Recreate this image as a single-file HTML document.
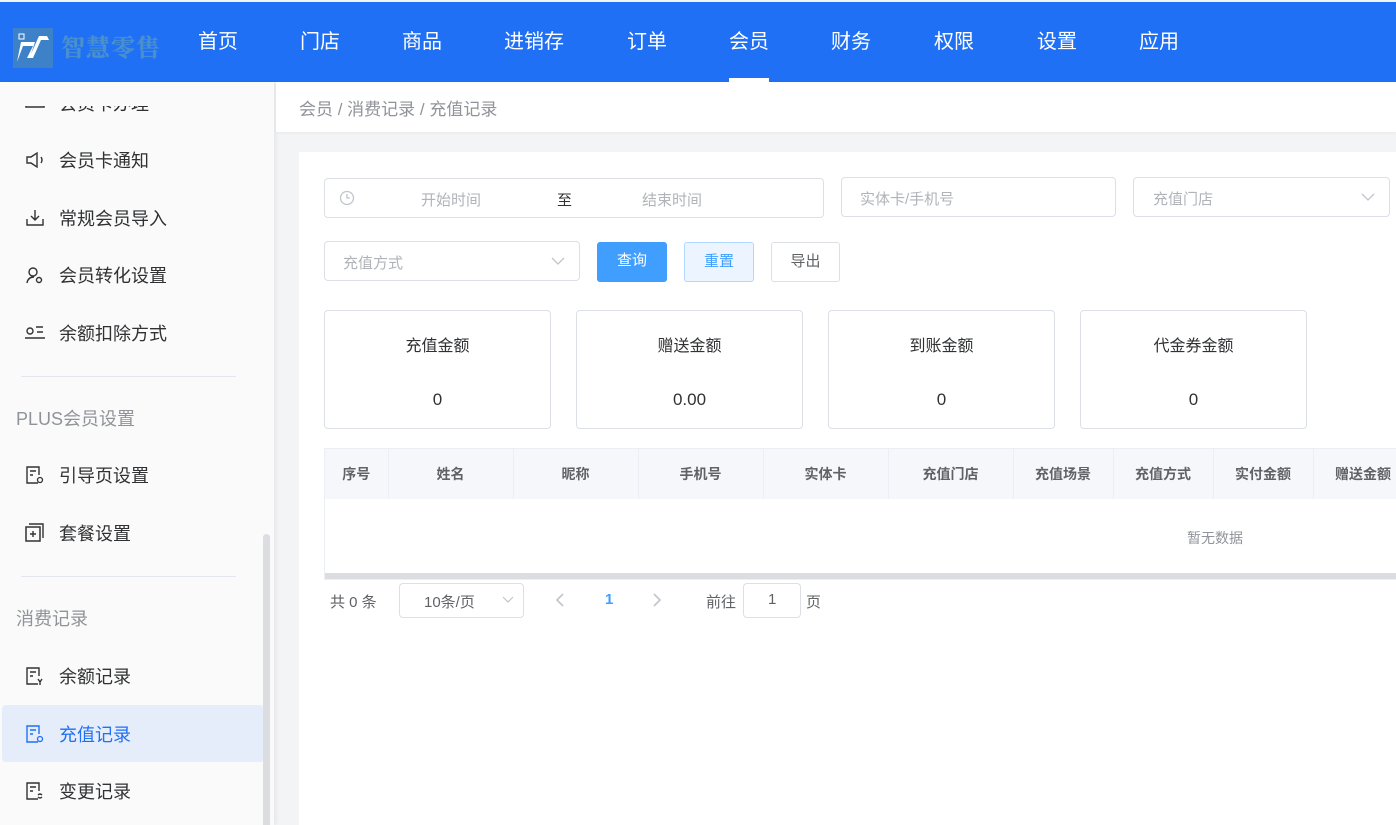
<!DOCTYPE html>
<html><head><meta charset="utf-8"><style>
*{box-sizing:border-box;margin:0;padding:0}
body{width:1396px;height:825px;overflow:hidden;background:#f3f4f6;font-family:"Liberation Sans","Noto Sans CJK SC",sans-serif;position:relative;color:#303133}
.top{position:absolute;left:0;top:2px;width:1396px;height:80px;background:#1f70f5}
.nav{position:absolute;top:0;height:80px;line-height:80px;color:#fff;font-size:20px;transform:translateX(-50%)}
.nav.act:after{content:"";position:absolute;left:0;right:0;bottom:0;height:4px;background:#fff}
.side{position:absolute;left:0;top:82px;width:274px;height:743px;background:#fafafa;box-shadow:2px 0 4px rgba(0,0,0,.06);overflow:hidden}
.it{position:absolute;left:24px;font-size:18px;color:#303133;display:flex;align-items:center}
.it svg{margin-right:13px}
.grp{position:absolute;left:16px;font-size:18px;color:#909399}
.hr{position:absolute;left:21px;width:215px;height:1px;background:#e4e7ed}
.abs{position:absolute}
.inp{position:absolute;border:1px solid #dcdfe6;border-radius:4px;background:#fff;font-size:15px;color:#b0b3b8}
.btn{position:absolute;border-radius:3px;font-size:15px;text-align:center;line-height:38px;height:40px}
.stat{position:absolute;top:310px;width:227px;height:119px;border:1px solid #dcdfe6;border-radius:4px;background:#fff;text-align:center}
.stat .a{margin-top:21px;font-size:16px;color:#303133}
.stat .b{margin-top:34px;font-size:17px}
table{table-layout:fixed}
th{font-size:14px;color:#606266;font-weight:bold;border-right:1px solid #ebeef5;height:50px;white-space:nowrap;overflow:hidden}
</style></head><body>
<div class="top">
<svg class="abs" style="left:13px;top:26px" width="40" height="40" viewBox="0 0 40 40"><rect width="40" height="40" fill="#3d82c9"/><path d="M4 34 L10 18 L20 18 L14 30 L20 30 L28 12 L36 12 L34 8 L26 8 L18 26 L22 14 L8 14 Z" fill="#fff"/><rect x="6" y="6" width="5" height="5" fill="none" stroke="#fff"/></svg>
<div class="abs" style="left:61px;top:26px;font-size:24px;font-weight:bold;color:#4a90cf;letter-spacing:1px;font-family:'Noto Serif CJK SC',serif;text-shadow:0 0 1px #4a90cf">智慧零售</div>
<div class="nav" style="left:218px">首页</div><div class="nav" style="left:320px">门店</div><div class="nav" style="left:422px">商品</div><div class="nav" style="left:534px">进销存</div><div class="nav" style="left:647px">订单</div><div class="nav act" style="left:749px">会员</div><div class="nav" style="left:851px">财务</div><div class="nav" style="left:954px">权限</div><div class="nav" style="left:1057px">设置</div><div class="nav" style="left:1159px">应用</div>
</div>
<div class="side">
<div class="it" style="top:8px"><svg width="22" height="20"><path d="M2 4v10h18V4" fill="none" stroke="#333" stroke-width="1.5"/></svg>会员卡办理</div>
<div class="abs" style="left:0;top:0;width:274px;height:24px;background:#fafafa"></div>
<div class="it" style="top:65px"><svg width="22" height="20"><path d="M3 7h4l6-4v14l-6-4H3z M17 7q2 3 0 6" fill="none" stroke="#333" stroke-width="1.4"/></svg>会员卡通知</div>
<div class="it" style="top:123px"><svg width="22" height="20"><path d="M11 2v10M7 8l4 4 4-4M3 11v6h16v-6" fill="none" stroke="#333" stroke-width="1.4"/></svg>常规会员导入</div>
<div class="it" style="top:180px"><svg width="22" height="20"><circle cx="9" cy="7" r="4" fill="none" stroke="#333" stroke-width="1.4"/><path d="M3 18q1-6 7-6" fill="none" stroke="#333" stroke-width="1.4"/><circle cx="15" cy="15" r="2.5" fill="none" stroke="#333" stroke-width="1.4"/></svg>会员转化设置</div>
<div class="it" style="top:238px"><svg width="22" height="20"><circle cx="6" cy="8" r="3" fill="none" stroke="#333" stroke-width="1.4"/><path d="M12 4h7M13 9h6M1 15h20" stroke="#333" stroke-width="1.4"/></svg>余额扣除方式</div>
<div class="hr" style="top:294px"></div>
<div class="grp" style="top:323px">PLUS会员设置</div>
<div class="it" style="top:380px"><svg width="22" height="20"><path d="M14 18H3V2h12v8M6 6h6M6 10h3" fill="none" stroke="#333" stroke-width="1.4"/><circle cx="16" cy="15" r="2.5" fill="none" stroke="#333" stroke-width="1.3"/></svg>引导页设置</div>
<div class="it" style="top:438px"><svg width="22" height="20"><rect x="2" y="4" width="14" height="14" fill="none" stroke="#333" stroke-width="1.5"/><path d="M5 1h14v14M9 8v6M6 11h6" fill="none" stroke="#333" stroke-width="1.4"/></svg>套餐设置</div>
<div class="hr" style="top:494px"></div>
<div class="grp" style="top:523px">消费记录</div>
<div class="it" style="top:581px"><svg width="22" height="20"><path d="M14 18H3V2h12v8M6 6h6M6 10h3M14 13l2 3 2-3M16 16v3" fill="none" stroke="#333" stroke-width="1.4"/></svg>余额记录</div>
<div class="abs" style="left:2px;top:623px;width:262px;height:57px;background:#e5edfb;border-radius:4px"></div>
<div class="it" style="top:639px;color:#1f70f5"><svg width="22" height="20"><path d="M14 18H3V2h12v8M6 6h6M6 10h3" fill="none" stroke="#1f70f5" stroke-width="1.4"/><circle cx="16" cy="15" r="2.5" fill="none" stroke="#1f70f5" stroke-width="1.3"/></svg>充值记录</div>
<div class="it" style="top:696px"><svg width="22" height="20"><path d="M14 18H3V2h12v8M6 6h6M6 10h3M14 14q2-2 4 0M18 16q-2 2-4 0" fill="none" stroke="#333" stroke-width="1.4"/></svg>变更记录</div>
<div class="abs" style="left:263px;top:452px;width:7px;height:300px;background:#dcdde0;border-radius:4px"></div>
</div>
<div class="abs" style="left:276px;top:82px;width:1120px;height:50px;background:#fff;box-shadow:0 1px 3px rgba(0,0,0,.05)"></div>
<div class="abs" style="left:299px;top:95px;font-size:17px;color:#909399">会员 / 消费记录 / 充值记录</div>
<div class="abs" style="left:299px;top:152px;width:1097px;height:673px;background:#fff"></div>
<div class="inp" style="left:324px;top:178px;width:500px;height:40px">
<svg class="abs" style="left:14px;top:11px" width="16" height="16"><circle cx="8" cy="8" r="6.5" fill="none" stroke="#c0c4cc" stroke-width="1.3"/><path d="M8 4v4h3" fill="none" stroke="#c0c4cc" stroke-width="1.3"/></svg>
<span class="abs" style="left:96px;top:10px">开始时间</span><span class="abs" style="left:232px;top:10px;color:#303133">至</span><span class="abs" style="left:317px;top:10px">结束时间</span></div>
<div class="inp" style="left:841px;top:177px;width:275px;height:40px"><span class="abs" style="left:18px;top:10px">实体卡/手机号</span></div>
<div class="inp" style="left:1133px;top:177px;width:257px;height:40px"><span class="abs" style="left:19px;top:10px">充值门店</span><svg class="abs" style="left:227px;top:14px" width="14" height="10"><path d="M1 2l6 6 6-6" fill="none" stroke="#c0c4cc" stroke-width="1.3"/></svg></div>
<div class="inp" style="left:324px;top:241px;width:256px;height:40px"><span class="abs" style="left:18px;top:10px">充值方式</span><svg class="abs" style="left:226px;top:14px" width="14" height="10"><path d="M1 2l6 6 6-6" fill="none" stroke="#c0c4cc" stroke-width="1.3"/></svg></div>
<div class="btn" style="left:597px;top:242px;width:70px;background:#409eff;color:#fff">查询</div>
<div class="btn" style="left:684px;top:242px;width:70px;background:#ecf5ff;border:1px solid #b3d8ff;color:#409eff">重置</div>
<div class="btn" style="left:771px;top:242px;width:69px;background:#fff;border:1px solid #dcdfe6;color:#606266">导出</div>
<div class="stat" style="left:324px"><div class="a">充值金额</div><div class="b">0</div></div>
<div class="stat" style="left:576px"><div class="a">赠送金额</div><div class="b">0.00</div></div>
<div class="stat" style="left:828px"><div class="a">到账金额</div><div class="b">0</div></div>
<div class="stat" style="left:1080px"><div class="a">代金券金额</div><div class="b">0</div></div>
<div class="abs" style="left:324px;top:448px;width:1072px;height:132px;border:1px solid #ebeef5;border-right:none;overflow:hidden">
<table style="border-collapse:collapse;background:#f5f7fa;width:1088px"><colgroup><col style="width:63px"><col style="width:125px"><col style="width:125px"><col style="width:125px"><col style="width:125px"><col style="width:125px"><col style="width:100px"><col style="width:100px"><col style="width:100px"><col style="width:100px"></colgroup><tr>
<th>序号</th><th>姓名</th><th>昵称</th><th>手机号</th><th>实体卡</th><th>充值门店</th><th>充值场景</th><th>充值方式</th><th>实付金额</th><th>赠送金额</th></tr></table>
<div class="abs" style="left:862px;top:79px;font-size:14px;color:#909399">暂无数据</div>
<div class="abs" style="left:0;top:124px;width:1072px;height:8px;background:#dcdde0"></div>
</div>
<div class="abs" style="left:330px;top:591px;font-size:15px;color:#606266">共 0 条</div>
<div class="inp" style="left:399px;top:583px;width:125px;height:35px;color:#606266"><span class="abs" style="left:24px;top:7px">10条/页</span><svg class="abs" style="left:102px;top:12px" width="12" height="8"><path d="M1 1l5 5 5-5" fill="none" stroke="#c0c4cc" stroke-width="1.2"/></svg></div>
<svg class="abs" style="left:555px;top:593px" width="10" height="14"><path d="M8 1L2 7l6 6" fill="none" stroke="#c0c4cc" stroke-width="1.6"/></svg>
<div class="abs" style="left:605px;top:591px;font-size:15px;font-weight:bold;color:#409eff">1</div>
<svg class="abs" style="left:652px;top:593px" width="10" height="14"><path d="M2 1l6 6-6 6" fill="none" stroke="#c0c4cc" stroke-width="1.6"/></svg>
<div class="abs" style="left:706px;top:591px;font-size:15px;color:#606266">前往</div>
<div class="inp" style="left:743px;top:583px;width:58px;height:35px;color:#606266"><span class="abs" style="left:24px;top:7px">1</span></div>
<div class="abs" style="left:806px;top:591px;font-size:15px;color:#606266">页</div>
</body></html>
